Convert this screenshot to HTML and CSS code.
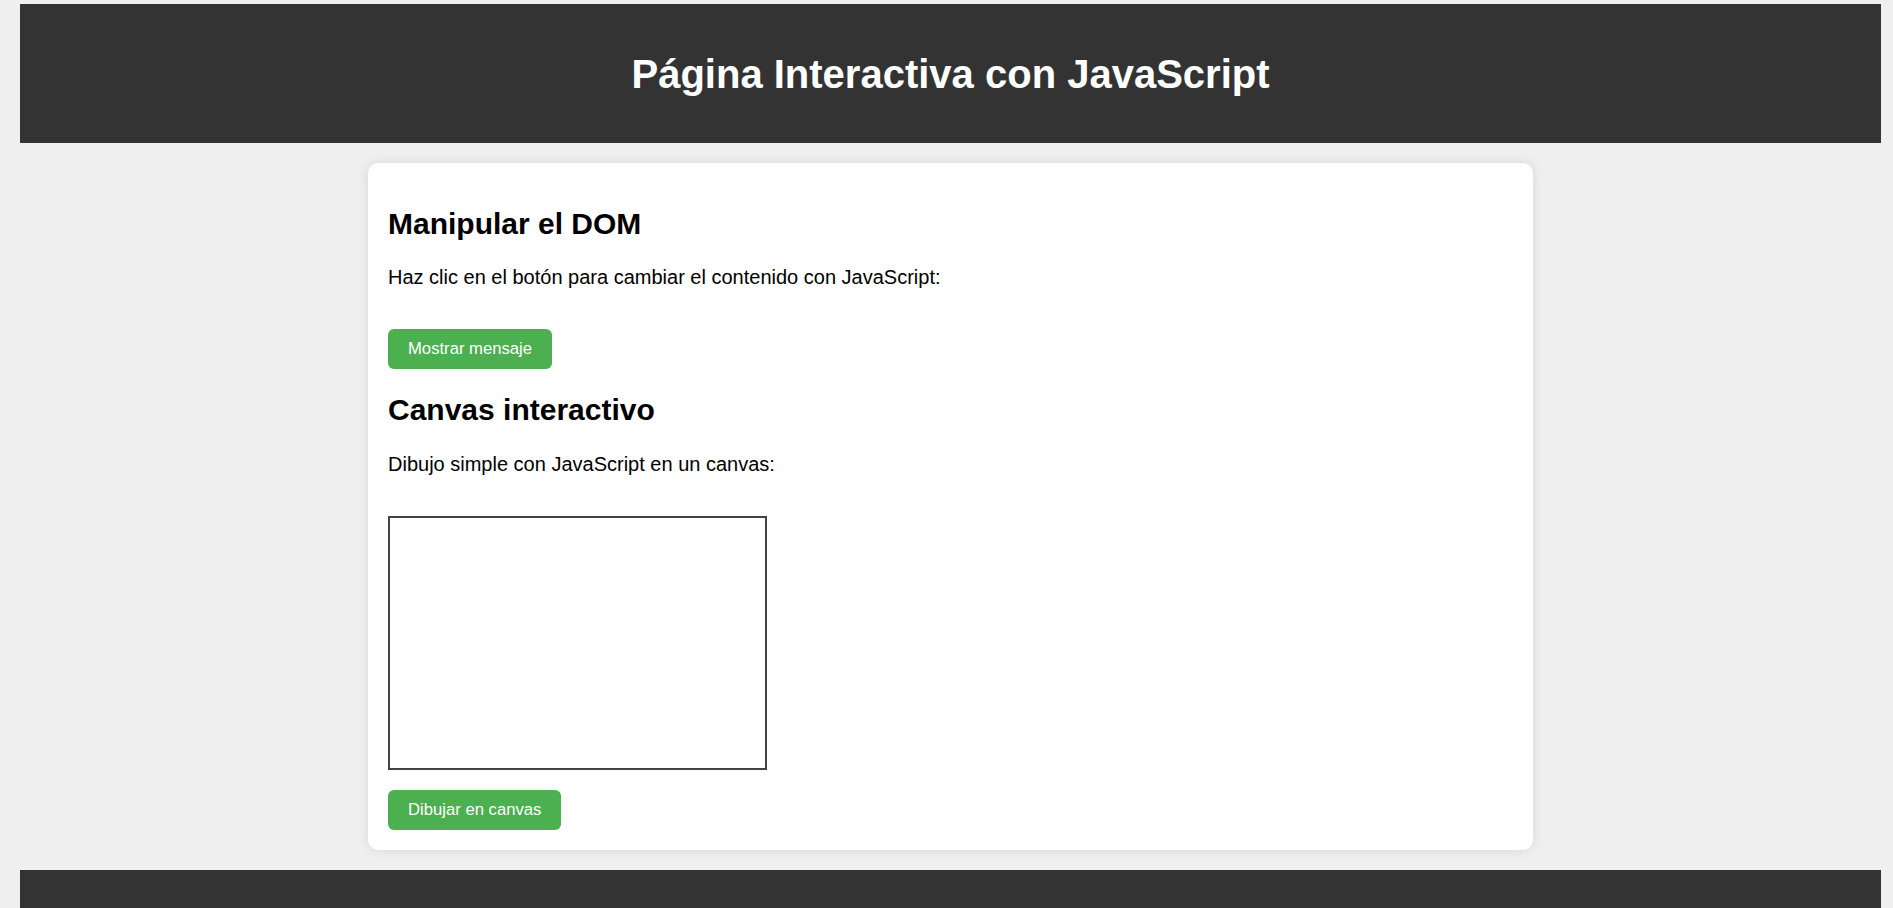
FILE: index.html
```html
<!DOCTYPE html>
<html lang="es">
<head>
<meta charset="utf-8">
<title>Página Interactiva con JavaScript</title>
<link rel="stylesheet" href="styles.css">
</head>
<body>
<header class="site-header">
  <h1 class="site-title">Página Interactiva con JavaScript</h1>
</header>
<main class="main">
  <section class="card">
    <h2 class="section-title">Manipular el DOM</h2>
    <p class="text">Haz clic en el botón para cambiar el contenido con JavaScript:</p>
    <button class="btn btn-first" type="button">Mostrar mensaje</button>
    <h2 class="section-title">Canvas interactivo</h2>
    <p class="text">Dibujo simple con JavaScript en un canvas:</p>
    <canvas class="draw-canvas" width="375" height="250"></canvas>
    <button class="btn" type="button">Dibujar en canvas</button>
  </section>
</main>
<footer class="site-footer"></footer>
</body>
</html>
```
FILE: styles.css
```css
html, body {
  background: #efefef;
}
body {
  margin: 4px 12px 0 20px;
  font-family: "Liberation Sans", Arial, sans-serif;
  color: #000;
}
.site-header {
  background: #333333;
  color: #fff;
  padding: 20px;
  text-align: center;
}
.site-title {
  margin: 26.5px 0;
  font-size: 40px;
  font-weight: bold;
  line-height: 46px;
}
.main {
  padding: 20px 0;
}
.card {
  width: 1125px;
  margin: 0 auto;
  padding: 20px;
  background: #fff;
  border-radius: 10px;
  box-shadow: 0 0 12px rgba(0, 0, 0, 0.1);
}
.section-title {
  font-size: 30px;
  font-weight: bold;
  line-height: 34.5px;
  margin: 23.5px 0 25px;
}
.btn + .section-title {
  margin-top: 24.5px;
}
.text {
  font-size: 20px;
  line-height: 23px;
  margin: 0 0 20px;
}
.btn {
  display: block;
  margin: 39.5px 0 0;
  padding: 10px 20px;
  height: 40px;
  border: none;
  border-radius: 6px;
  background: #4caf50;
  color: #fff;
  font-family: "Liberation Sans", Arial, sans-serif;
  font-size: 16.67px;
  line-height: 20px;
}
.draw-canvas {
  display: block;
  margin: 40.5px 0 0;
  width: 375px;
  height: 250px;
  border: 2px solid #444;
  background: #fff;
}
.draw-canvas + .btn {
  margin-top: 20px;
}
.site-footer {
  background: #333333;
  height: 80px;
}
```
